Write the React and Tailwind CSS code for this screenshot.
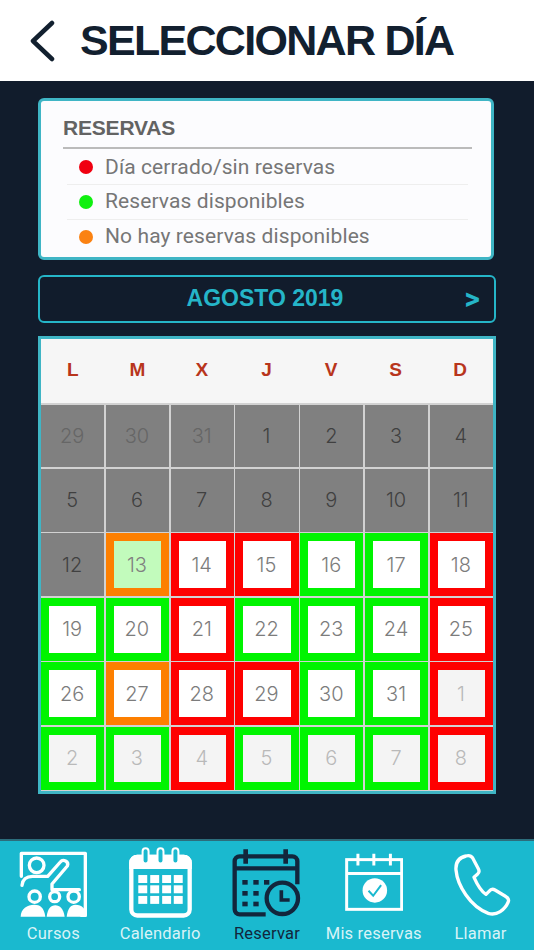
const days = [
  [[29, 'past'], [30, 'past'], [31, 'past'], [1, 'gray'], [2, 'gray'], [3, 'gray'], [4, 'gray']],
  [[5, 'gray'], [6, 'gray'], [7, 'gray'], [8, 'gray'], [9, 'gray'], [10, 'gray'], [11, 'gray']],
  [[12, 'gray'], [13, 'today'], [14, 'red'], [15, 'red'], [16, 'green'], [17, 'green'], [18, 'red']],
  [[19, 'green'], [20, 'green'], [21, 'red'], [22, 'green'], [23, 'green'], [24, 'green'], [25, 'red']],
  [[26, 'green'], [27, 'orange'], [28, 'red'], [29, 'red'], [30, 'green'], [31, 'green'], [1, 'red', true]],
  [[2, 'green', true], [3, 'green', true], [4, 'red', true], [5, 'green', true], [6, 'green', true], [7, 'green', true], [8, 'red', true]],
];

const borders = {
  red: 'border-[#fe0000]',
  green: 'border-[#00f400]',
  orange: 'border-[#fd7f00]',
  today: 'border-[#fd7f00]',
};

function DayCell({ day, kind, next }) {
  if (kind === 'past' || kind === 'gray') {
    return (
      <div className={`flex items-center justify-center bg-[#808080] pr-[1px] font-['Inter',sans-serif] text-[20px] font-light ${kind === 'past' ? 'text-[#666666]' : 'text-[#404040]'}`}>
        {day}
      </div>
    );
  }

  const fill = kind === 'today' ? 'bg-[#c2fbbc] text-[#808080]' : next ? 'bg-[#f4f4f4] text-[#b9b9b9]' : 'bg-white text-[#7c7c7c]';
  return (
    <div className={`flex items-center justify-center border-[8px] pr-[1px] font-['Inter',sans-serif] text-[20px] font-light ${borders[kind]} ${fill}`}>
      {day}
    </div>
  );
}

function LegendRow({ dot, label, last }) {
  return (
    <div className={`flex h-[34.5px] items-center pl-[12px] ${last ? '' : 'border-b border-[#eeeeee]'}`}>
      <span className={`h-[14px] w-[14px] rounded-full ${dot}`} />
      <span className="ml-[12px] text-[21px] tracking-[0.1px] text-[#767676]">{label}</span>
    </div>
  );
}

function CursosIcon() {
  return (
    <svg viewBox="0 0 225 216" className="mt-[3px] h-[72px] w-[75px]" fill="none" stroke="white" strokeWidth="10" strokeLinecap="round" strokeLinejoin="round">
      <path d="M16 85V16H208V202H196" />
      <circle cx="62" cy="52" r="22" />
      <path d="M18 112C20 92 34 85 50 85H95L133 42C141 32 160 40 154 54L108 108V125H190" />
      <circle cx="56" cy="146" r="17" />
      <circle cx="116" cy="146" r="15" />
      <circle cx="173" cy="146" r="17" />
      <g fill="white" stroke="none">
        <path d="M14 206C14 182 34 170 55 170C72 170 84 178 88 206Z" />
        <path d="M92 206C95 182 104 172 118 172C132 172 142 182 146 206Z" />
        <path d="M152 206C155 180 165 170 178 170C198 170 212 184 212 206Z" />
      </g>
    </svg>
  );
}

function CalendarIcon() {
  const xs = [413, 449, 485, 520];
  const ys = [137, 168, 200];
  return (
    <svg viewBox="385 50 190 216" className="h-[72px] w-[63px]">
      <rect x="392" y="82" width="176" height="177" rx="18" fill="none" stroke="white" strokeWidth="13" />
      <path d="M392 100a18 18 0 0 1 18-18H550a18 18 0 0 1 18 18V112H392Z" fill="white" stroke="white" strokeWidth="13" />
      {[435, 480, 525].map((x) => (
        <rect key={x} x={x - 9} y="56" width="18" height="46" rx="9" fill="#1ab9cf" stroke="white" strokeWidth="6" />
      ))}
      {ys.map((y) => xs.map((x) => <rect key={`${x}-${y}`} x={x} y={y} width="27" height="24" fill="white" />))}
    </svg>
  );
}

function ReservarIcon() {
  const dots = [[55, 105], [88, 105], [120, 105], [55, 138], [88, 138], [55, 170], [88, 170]];
  return (
    <svg viewBox="0 0 255 240" className="mt-[5px] h-[80px] w-[85px]" fill="none" stroke="#12263c" strokeWidth="13">
      <path d="M125 208H47A15 15 0 0 1 32 193V49A15 15 0 0 1 47 34H205A15 15 0 0 1 220 49V118" />
      <path d="M32 70H220" />
      <path d="M65 13V56M185 13V56" strokeWidth="14" />
      {dots.map(([x, y]) => <rect key={`${x}-${y}`} x={x} y={y} width="16" height="14" fill="#12263c" stroke="none" />)}
      <circle cx="175" cy="160" r="47" />
      <path d="M172 136V165H197" strokeWidth="11" />
    </svg>
  );
}

function MisReservasIcon() {
  return (
    <svg viewBox="243 70 175 175" className="h-[58px] w-[58px]" fill="none" stroke="white" strokeWidth="9">
      <rect x="248" y="90" width="166" height="150" />
      <path d="M248 132H414" />
      <path d="M282 72V108M330 72V108M380 72V108" />
      <circle cx="333" cy="183" r="37" fill="white" stroke="none" />
      <path d="M314 184L328 199L352 167" stroke="#1ab9cf" strokeWidth="6" />
    </svg>
  );
}

function LlamarIcon() {
  return (
    <svg viewBox="0 0 192 210" className="mt-[5px] ml-[2px] h-[70px] w-[64px]" fill="none" stroke="white" strokeWidth="10" strokeLinejoin="round">
      <path d="M48 18C30 22 16 35 18 60C22 105 60 170 115 190C140 198 165 180 175 155C178 147 172 142 165 138L135 120C128 116 122 118 117 124L108 133C95 125 80 100 72 82L83 72C88 68 88 62 85 56L68 24C64 18 56 16 48 18Z" />
    </svg>
  );
}

const tabs = [
  { label: 'Cursos', icon: <CursosIcon /> },
  { label: 'Calendario', icon: <CalendarIcon /> },
  { label: 'Reservar', icon: <ReservarIcon />, active: true },
  { label: 'Mis reservas', icon: <MisReservasIcon /> },
  { label: 'Llamar', icon: <LlamarIcon /> },
];

export default function App() {
  return (
    <div className="flex h-[950px] w-[534px] flex-col overflow-hidden bg-[#111c2c] font-['Liberation_Sans',sans-serif]">
      <header className="flex h-[81px] items-center bg-white pl-[29px]">
        <svg viewBox="0 0 26 42" className="h-[42px] w-[26px]" fill="none" stroke="#12202f" strokeWidth="4.5" strokeLinecap="round" strokeLinejoin="round">
          <path d="M23 3L4 21L23 39" />
        </svg>
        <h1 className="ml-[25px] text-[43px] font-bold tracking-[-1.7px] text-[#12202f]">SELECCIONAR DÍA</h1>
      </header>

      <main className="flex flex-col px-[38px] pt-[17px]">
        <section className="mr-[2px] h-[162px] rounded-[6px] border-[3px] border-[#3fb5c5] bg-[#fcfcfe] pt-[14px] pr-[19px] pl-[22px]">
          <h2 className="border-b-[2.5px] border-[#bbbbbb] pb-[6px] text-[21px] leading-[26px] font-bold tracking-[-0.2px] text-[#636363]">RESERVAS</h2>
          <div className="px-[4px] pt-[1.5px] font-['Roboto',sans-serif]">
            <LegendRow dot="bg-[#f00010]" label="Día cerrado/sin reservas" />
            <LegendRow dot="bg-[#10f010]" label="Reservas disponibles" />
            <LegendRow dot="bg-[#fb8212]" label="No hay reservas disponibles" last />
          </div>
        </section>

        <div className="relative mt-[15px] flex h-[48px] items-center justify-center rounded-[6px] border-[2.5px] border-[#25b5c8] text-[23px] font-bold text-[#25b5c8]">
          <span className="pr-[4px] pb-[2px]">AGOSTO 2019</span>
          <span className="absolute right-[13px] font-['Inter',sans-serif] text-[25px] font-extrabold">&gt;</span>
        </div>

        <section className="mt-[13px] border-[3px] border-[#3fb5c5] bg-[#d2d2d2]">
          <div className="grid h-[64px] grid-cols-7 bg-[#f6f6f6] text-[19px] font-bold text-[#b8351c]">
            {['L', 'M', 'X', 'J', 'V', 'S', 'D'].map((letter) => (
              <div key={letter} className="flex items-center justify-center pr-[1px] pb-[1px]">{letter}</div>
            ))}
          </div>
          <div className="grid h-[388px] grid-cols-7 grid-rows-6 gap-[1.5px] py-[1.5px]">
            {days.flat().map(([day, kind, next], index) => (
              <DayCell key={index} day={day} kind={kind} next={next} />
            ))}
          </div>
        </section>
      </main>

      <nav className="mt-auto grid h-[111px] grid-cols-5 border-t-2 border-[#2c6d7c] bg-[#1ab9cf] font-['Roboto',sans-serif]">
        {tabs.map((tab) => (
          <div key={tab.label} className={`flex flex-col items-center ${tab.active ? 'text-[#12263c]' : 'text-[#d8f3f7]'}`}>
            <div className="flex h-[82px] items-center justify-center">{tab.icon}</div>
            <span className="pt-[1px] text-[16.5px] leading-[20px] tracking-[0.2px]">{tab.label}</span>
          </div>
        ))}
      </nav>
    </div>
  );
}
